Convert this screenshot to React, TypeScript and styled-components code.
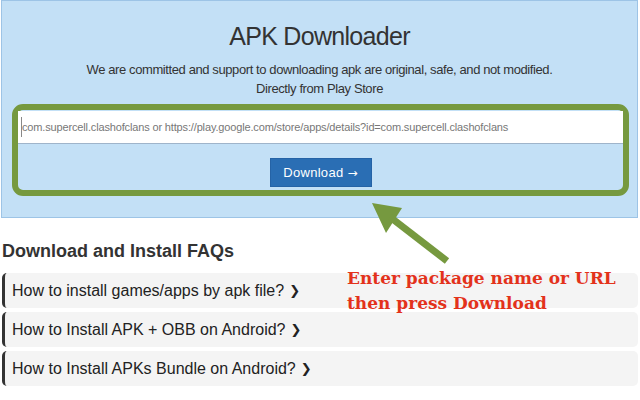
import styled, { createGlobalStyle } from "styled-components";

const GlobalStyle = createGlobalStyle`
  html, body {
    margin: 0;
    background: #fff;
  }
  body {
    font-family: "Liberation Sans", Arial, sans-serif;
    color: #333;
  }
`;

const Page = styled.div`
  position: relative;
  width: 640px;
  height: 400px;
  overflow: hidden;
`;

/** Light blue hero box with the search form */
const Hero = styled.section`
  margin: 0 2px 0 1px;
  padding: 20px 0 21px;
  background: #c3e0f6;
  border: 1px solid #9dc4e6;
  text-align: center;
`;

const Title = styled.h1`
  margin: 0;
  font-size: 25px;
  font-weight: 400;
  line-height: 30px;
  letter-spacing: -0.7px;
  color: #333;
`;

const Lead = styled.p`
  margin: 9px 0 6px;
  font-size: 13px;
  line-height: 19px;
  letter-spacing: -0.4px;
  color: #333;
`;

const Highlight = styled.div`
  margin: 0 8px 0 10px;
  padding: 1px 0 3px;
  border: 6px solid #76993f;
  border-radius: 11px;
`;

const Field = styled.div`
  position: relative;

  &::before {
    content: "";
    position: absolute;
    left: 3px;
    top: 6px;
    width: 1px;
    height: 20px;
    background: #888;
  }
`;

const UrlInput = styled.input`
  display: block;
  box-sizing: border-box;
  width: 100%;
  height: 33px;
  padding: 0 4px;
  border: 0;
  border-bottom: 1px solid #9fb4ca;
  background: #fff;
  font-family: "Liberation Sans", Arial, sans-serif;
  font-size: 11px;
  letter-spacing: -0.15px;
  outline: none;

  &::placeholder {
    color: #777;
  }
`;

const DownloadButton = styled.button`
  display: block;
  margin: 14px auto 0;
  width: 102px;
  height: 29px;
  padding: 0;
  border: 1px solid #2563a6;
  background: #2a6eb4;
  color: #fff;
  font-family: "Liberation Sans", Arial, sans-serif;
  font-size: 13px;
  letter-spacing: 0.3px;
`;

const Arrow = styled.span`
  font-family: "DejaVu Sans", sans-serif;
  font-size: 12px;
`;

const FaqTitle = styled.h2`
  margin: 22px 0 11px 2px;
  font-size: 18px;
  line-height: 22px;
  font-weight: 700;
  color: #333;
`;

const FaqList = styled.div`
  display: flex;
  flex-direction: column;
  gap: 4px;
  margin: 0 2px;
`;

const FaqItem = styled.div`
  height: 35px;
  padding-left: 7px;
  background: #f4f4f4;
  border-left: 3px solid #333;
  border-radius: 5px;
  font-size: 16px;
  line-height: 35px;
  color: #222;
`;

const Chevron = styled.span`
  margin-left: 5px;
  font-family: "DejaVu Sans", sans-serif;
  font-size: 13px;
  font-weight: 700;
  vertical-align: 1px;
`;

/* screenshot annotation, drawn over the page */
const Note = styled.div`
  position: absolute;
  left: 347px;
  top: 266px;
  font-family: "DejaVu Serif", "Liberation Serif", serif;
  font-weight: 700;
  font-size: 17px;
  line-height: 25px;
  color: #e3321b;
`;

const Pointer = styled.svg`
  position: absolute;
  left: 360px;
  top: 195px;
`;

const faqs = [
  "How to install games/apps by apk file?",
  "How to Install APK + OBB on Android?",
  "How to Install APKs Bundle on Android?",
];

export default function App() {
  return (
    <Page>
      <GlobalStyle />
      <Hero>
        <Title>APK Downloader</Title>
        <Lead>
          We are committed and support to downloading apk are original, safe, and not modified.
          <br />
          Directly from Play Store
        </Lead>
        <Highlight>
          <Field>
            <UrlInput placeholder="com.supercell.clashofclans or https://play.google.com/store/apps/details?id=com.supercell.clashofclans" />
          </Field>
          <DownloadButton>
            Download <Arrow>→</Arrow>
          </DownloadButton>
        </Highlight>
      </Hero>

      <FaqTitle>Download and Install FAQs</FaqTitle>
      <FaqList>
        {faqs.map((q) => (
          <FaqItem key={q}>
            {q}
            <Chevron>❯</Chevron>
          </FaqItem>
        ))}
      </FaqList>

      <Note>
        Enter package name or URL
        <br />
        then press Download
      </Note>
      <Pointer width="100" height="75" viewBox="0 0 100 75">
        <polygon points="12,8 42,13 26,38" fill="#76993f" />
        <line x1="30" y1="22" x2="87" y2="66" stroke="#76993f" strokeWidth="7" />
      </Pointer>
    </Page>
  );
}
